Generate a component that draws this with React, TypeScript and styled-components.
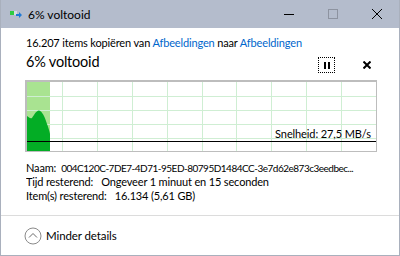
import React from "react";
import styled, { createGlobalStyle } from "styled-components";

const GlobalStyle = createGlobalStyle`
  html, body {
    margin: 0;
    padding: 0;
    background: #fff;
  }
  body {
    font-family: Lato, "Noto Sans", sans-serif;
    color: #000;
  }
`;

const Window = styled.div`
  width: 400px;
  height: 256px;
  box-sizing: border-box;
  border: 1px solid #a9b0bd;
  border-top: none;
  display: flex;
  flex-direction: column;
  background: #fff;
  overflow: hidden;
`;

const TitleBar = styled.div`
  height: 28px;
  flex-shrink: 0;
  background: #b4bccc;
  display: flex;
  align-items: center;
  padding-left: 9px;
`;

const TitleText = styled.span`
  font-size: 12px;
  margin-left: 6px;
  flex: 1;
  color: #000;
`;

const WinButton = styled.div`
  width: 44px;
  height: 28px;
  display: flex;
  align-items: center;
  justify-content: center;
`;

const Content = styled.div`
  flex: 1;
  padding: 8px 24px 0 25px;
  display: flex;
  flex-direction: column;
`;

const Summary = styled.div`
  font-size: 11px;
  letter-spacing: -0.15px;
  line-height: 14px;
  white-space: nowrap;
`;

const Link = styled.span`
  color: #0066cc;
`;

const HeaderRow = styled.div`
  display: flex;
  align-items: flex-start;
  height: 30px;
`;

const Percent = styled.div`
  font-size: 14.5px;
  letter-spacing: -0.2px;
  line-height: 20px;
  margin-top: 2px;
  flex: 1;
`;

const PauseButton = styled.div`
  width: 15px;
  height: 14px;
  border: 1px dotted #000;
  display: flex;
  align-items: center;
  justify-content: center;
  gap: 2px;
  margin-right: 27px;
  margin-top: 7px;
`;

const PauseBar = styled.span`
  width: 2px;
  height: 7px;
  background: #000;
`;

const CancelButton = styled.div`
  width: 10px;
  display: flex;
  justify-content: center;
  margin-right: 3px;
  margin-top: 11px;
`;

const Chart = styled.div`
  position: relative;
  width: 352px;
  height: 72px;
  box-sizing: border-box;
  border: 1px solid #bdbdbd;
  border-left-width: 2px;
  border-top-width: 2px;
  margin-left: -1px;
`;

const Speed = styled.div`
  position: absolute;
  right: 5px;
  top: 45px;
  font-size: 11px;
  letter-spacing: -0.1px;
`;

const Details = styled.div`
  margin-top: 9px;
  font-size: 11px;
  letter-spacing: -0.15px;
  line-height: 14px;
`;

const DetailRow = styled.div`
  display: flex;
  align-items: baseline;
  white-space: nowrap;
  overflow: hidden;
`;

const Label = styled.span<{ gap?: number }>`
  margin-right: ${({ gap }) => gap ?? 8}px;
`;

const NameValue = styled.span`
  font-size: 10px;
  letter-spacing: -0.5px;
`;

const Footer = styled.div`
  height: 39px;
  flex-shrink: 0;
  border-top: 1px solid #dcdcdc;
  display: flex;
  align-items: center;
  padding-left: 23px;
  gap: 4px;
  font-size: 11.5px;
  letter-spacing: -0.1px;
`;

const gridCols = Array.from({ length: 9 }, (_, i) => (i + 1) * 34.9);
const gridRows = Array.from({ length: 4 }, (_, i) => (i + 1) * 14);

function SpeedGraph() {
  return (
    <svg width="349" height="69" viewBox="0 0 349 69" style={{ display: "block" }}>
      <rect x="0" y="0" width="23" height="69" fill="#a9e391" />
      {gridRows.map((y) => (
        <line key={"r" + y} x1="0" x2="349" y1={y + 0.5} y2={y + 0.5} stroke="#cfeed3" strokeWidth="1" />
      ))}
      {gridCols.map((x) => (
        <line key={"c" + x} x1={Math.round(x) + 0.5} x2={Math.round(x) + 0.5} y1="0" y2="69" stroke="#cfeed3" strokeWidth="1" />
      ))}
      <path
        d="M0 34 C2 35 3 37 5 36 C7 33 9 29 12 28.5 C15 29 18 35 20 42 C21.5 46 22.5 49 23 52 L23 69 L0 69 Z"
        fill="#03ad25"
      />
      <line x1="0" x2="349" y1="59.5" y2="59.5" stroke="#000" strokeWidth="1.2" />
    </svg>
  );
}

export default function App() {
  return (
    <>
      <GlobalStyle />
      <Window>
        <TitleBar>
          <svg width="12" height="10" viewBox="0 0 12 10">
            <rect x="0" y="2" width="4" height="4" fill="#2ecc40" />
            <rect x="4" y="2" width="3" height="4" fill="#d8dde6" />
            <path d="M6 5 H9 V3 L12 6 L9 9 V7 H6 Z" fill="#1f7ad6" />
          </svg>
          <TitleText>6% voltooid</TitleText>
          <WinButton>
            <svg width="10" height="10" viewBox="0 0 10 10">
              <line x1="0" x2="10" y1="5.5" y2="5.5" stroke="#000" strokeWidth="1" />
            </svg>
          </WinButton>
          <WinButton>
            <svg width="10" height="10" viewBox="0 0 10 10">
              <rect x="0.5" y="0.5" width="9" height="9" fill="none" stroke="#8d93a0" strokeWidth="1" />
            </svg>
          </WinButton>
          <WinButton>
            <svg width="10" height="10" viewBox="0 0 10 10">
              <path d="M0 0 L10 10 M10 0 L0 10" stroke="#000" strokeWidth="1" />
            </svg>
          </WinButton>
        </TitleBar>
        <Content>
          <Summary>
            16.207 items kopiëren van <Link>Afbeeldingen</Link> naar <Link>Afbeeldingen</Link>
          </Summary>
          <HeaderRow>
            <Percent>6% voltooid</Percent>
            <PauseButton>
              <PauseBar />
              <PauseBar />
            </PauseButton>
            <CancelButton>
              <svg width="8" height="8" viewBox="0 0 8 8">
                <path d="M0.5 0.5 L7.5 7.5 M7.5 0.5 L0.5 7.5" stroke="#000" strokeWidth="2" />
              </svg>
            </CancelButton>
          </HeaderRow>
          <Chart>
            <SpeedGraph />
            <Speed>Snelheid: 27,5 MB/s</Speed>
          </Chart>
          <Details>
            <DetailRow>
              <Label gap={5}>Naam:</Label>
              <NameValue>004C120C-7DE7-4D71-95ED-80795D1484CC-3e7d62e873c3eedbec...</NameValue>
            </DetailRow>
            <DetailRow>
              <Label>Tijd resterend:</Label>
              <span>Ongeveer 1 minuut en 15 seconden</span>
            </DetailRow>
            <DetailRow>
              <Label>Item(s) resterend:</Label>
              <span>16.134 (5,61 GB)</span>
            </DetailRow>
          </Details>
        </Content>
        <Footer>
          <svg width="18" height="18" viewBox="0 0 18 18">
            <circle cx="9" cy="9" r="8" fill="none" stroke="#8a8a8a" strokeWidth="1" />
            <path d="M5 10.5 L9 6.5 L13 10.5" fill="none" stroke="#6a6a6a" strokeWidth="1" />
          </svg>
          <span>Minder details</span>
        </Footer>
      </Window>
    </>
  );
}
